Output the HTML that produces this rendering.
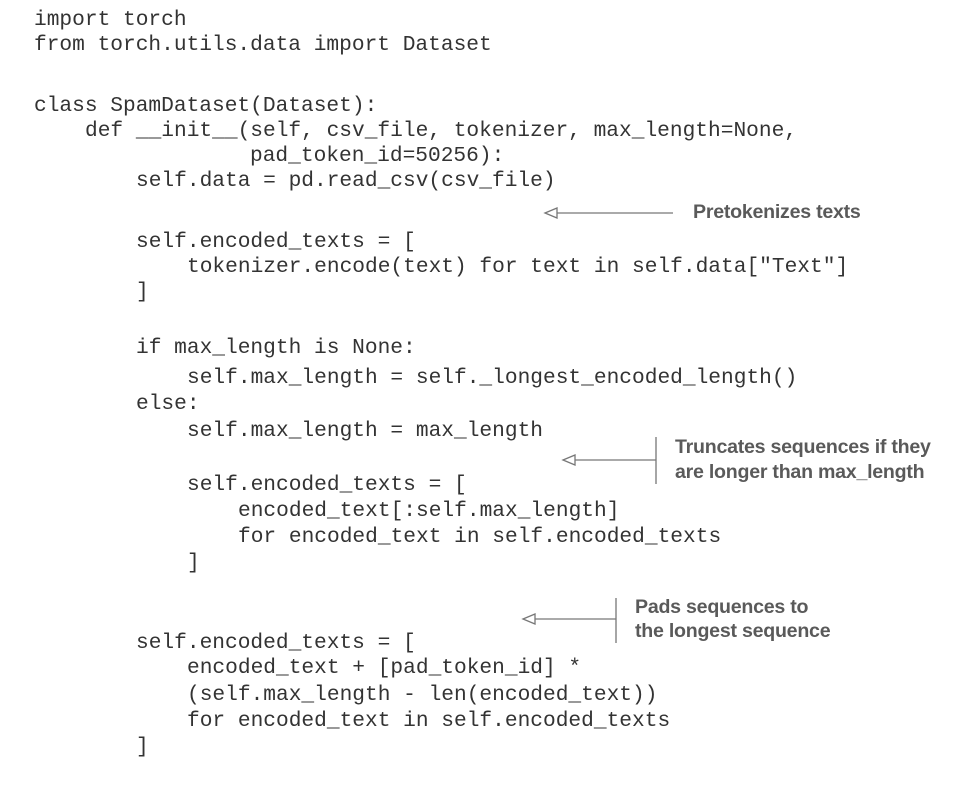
<!DOCTYPE html>
<html><head><meta charset="utf-8"><style>
body{margin:0;width:971px;height:802px;background:#fff;position:relative;overflow:hidden}
.c{position:absolute;font-family:"Liberation Mono",monospace;font-size:21.2px;color:#333;white-space:pre;line-height:24px}
.a{position:absolute;font-family:"Liberation Sans Narrow","Liberation Sans",sans-serif;font-weight:bold;font-size:19.6px;letter-spacing:-0.25px;color:#5a5a5a;white-space:pre;line-height:24px}
svg{position:absolute;left:0;top:0}
</style></head><body>
<div class="c" style="left:34px;top:8px">import torch</div>
<div class="c" style="left:34px;top:33px">from torch.utils.data import Dataset</div>
<div class="c" style="left:34px;top:94px">class SpamDataset(Dataset):</div>
<div class="c" style="left:85px;top:119px">def __init__(self, csv_file, tokenizer, max_length=None,</div>
<div class="c" style="left:250px;top:144px">pad_token_id=50256):</div>
<div class="c" style="left:136px;top:169px">self.data = pd.read_csv(csv_file)</div>
<div class="c" style="left:136px;top:230px">self.encoded_texts = [</div>
<div class="c" style="left:187px;top:255px">tokenizer.encode(text) for text in self.data["Text"]</div>
<div class="c" style="left:136px;top:280px">]</div>
<div class="c" style="left:136px;top:336px">if max_length is None:</div>
<div class="c" style="left:187px;top:366px">self.max_length = self._longest_encoded_length()</div>
<div class="c" style="left:136px;top:392px">else:</div>
<div class="c" style="left:187px;top:419px">self.max_length = max_length</div>
<div class="c" style="left:187px;top:473px">self.encoded_texts = [</div>
<div class="c" style="left:238px;top:499px">encoded_text[:self.max_length]</div>
<div class="c" style="left:238px;top:525px">for encoded_text in self.encoded_texts</div>
<div class="c" style="left:187px;top:551px">]</div>
<div class="c" style="left:136px;top:631px">self.encoded_texts = [</div>
<div class="c" style="left:187px;top:656px">encoded_text + [pad_token_id] *</div>
<div class="c" style="left:187px;top:683px">(self.max_length - len(encoded_text))</div>
<div class="c" style="left:187px;top:709px">for encoded_text in self.encoded_texts</div>
<div class="c" style="left:136px;top:735px">]</div>

<svg width="971" height="802" fill="none" stroke="#777" stroke-width="1.3">
<path d="M545 213 L557 208 L557 218 Z M557 213 H673"/>
<path d="M563 460 L575 455 L575 465 Z M575 460 H656 M656 437 V484"/>
<path d="M523 619 L535 614 L535 624 Z M535 619 H616 M616 598 V643"/>
</svg>
<div class="a" style="left:693px;top:200px">Pretokenizes texts</div>
<div class="a" style="left:675px;top:435px">Truncates sequences if they</div>
<div class="a" style="left:675px;top:460px">are longer than max_length</div>
<div class="a" style="left:635px;top:595px">Pads sequences to</div>
<div class="a" style="left:635px;top:619px">the longest sequence</div>
</body></html>
